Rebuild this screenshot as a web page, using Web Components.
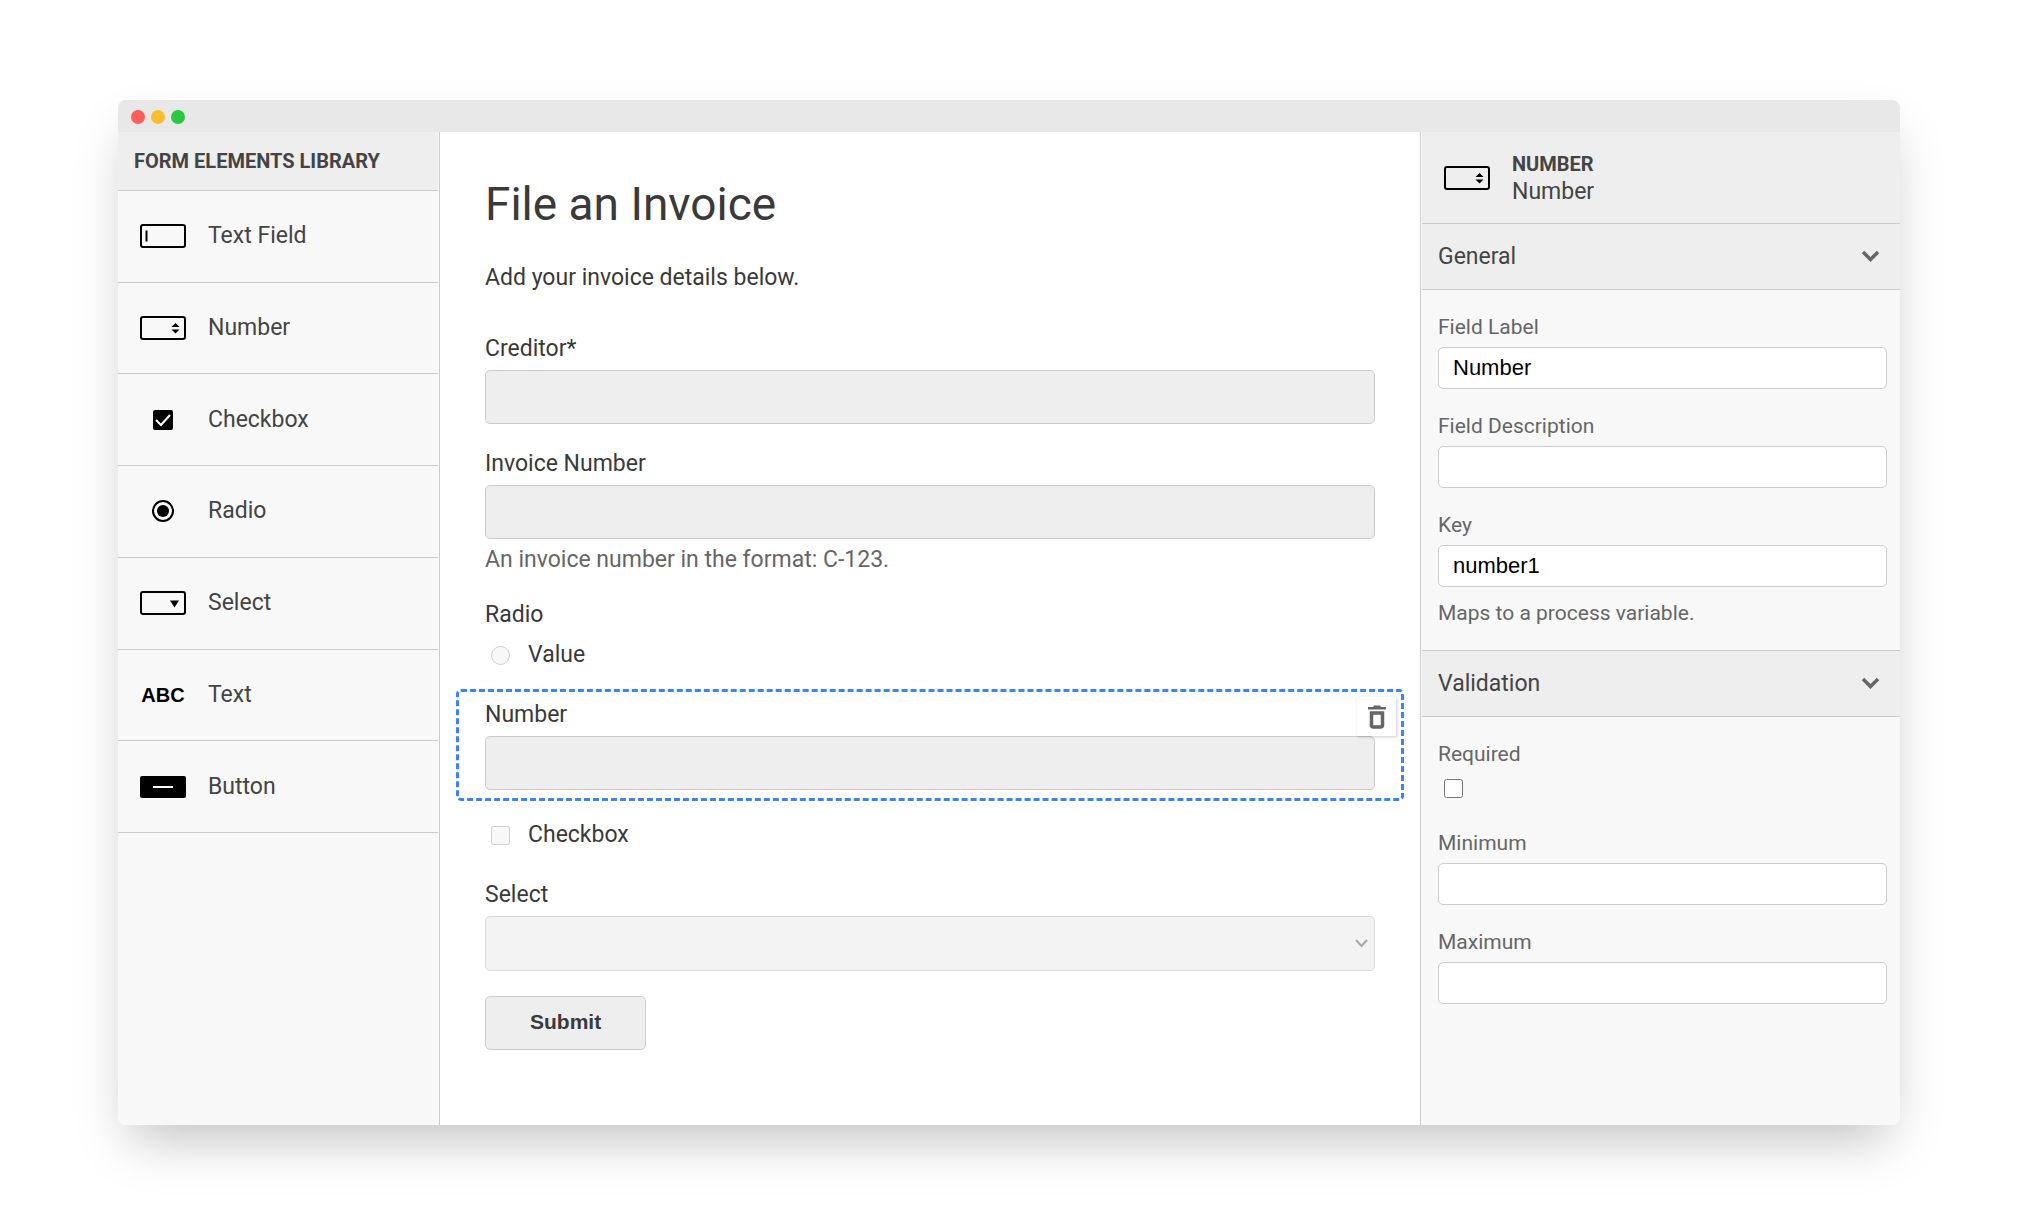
<!DOCTYPE html>
<html lang="en">
<head>
<meta charset="utf-8">
<title>Form Builder</title>
<style>
  body {
    --text: #444;
    --muted: #666;
    --line: #ccc;
    --panel: #f8f8f8;
    --panel-head: #eee;
    --accent: #3b82ff;
    margin: 0;
    min-height: 100vh;
    box-sizing: border-box;
    padding: 100px 118px;
    display: flex;
    background: #fff;
    color: var(--text);
    font: 23px/30px Roboto, "Open Sans", sans-serif;
  }
</style>
</head>
<body>
<builder-window>
  <palette-panel slot="palette" heading="Form Elements Library">
    <palette-item icon="textfield">Text Field</palette-item>
    <palette-item icon="number">Number</palette-item>
    <palette-item icon="checkbox">Checkbox</palette-item>
    <palette-item icon="radio">Radio</palette-item>
    <palette-item icon="select">Select</palette-item>
    <palette-item icon="text">Text</palette-item>
    <palette-item icon="button">Button</palette-item>
  </palette-panel>

  <form-canvas heading="File an Invoice" intro="Add your invoice details below.">
    <form-field type="text" label="Creditor*"></form-field>
    <form-field type="text" label="Invoice Number" description="An invoice number in the format: C-123."></form-field>
    <form-field type="radio" label="Radio" option="Value"></form-field>
    <form-field type="text" label="Number" selected="selected"></form-field>
    <form-field type="checkbox" label="Checkbox"></form-field>
    <form-field type="select" label="Select"></form-field>
    <form-field type="button" label="Submit"></form-field>
  </form-canvas>

  <properties-panel slot="properties" icon="number" kind="Number" name="Number">
    <property-group heading="General">
      <property-entry type="text" label="Field Label" value="Number"></property-entry>
      <property-entry type="text" label="Field Description" value=""></property-entry>
      <property-entry type="text" label="Key" value="number1" description="Maps to a process variable."></property-entry>
    </property-group>
    <property-group heading="Validation">
      <property-entry type="checkbox" label="Required"></property-entry>
      <property-entry type="text" label="Minimum" value=""></property-entry>
      <property-entry type="text" label="Maximum" value=""></property-entry>
    </property-group>
  </properties-panel>
</builder-window>

<script>
const define = (name, render) => customElements.define(name, class extends HTMLElement {
  connectedCallback() {
    if (this.shadowRoot) return;
    this.attachShadow({ mode: "open" }).innerHTML =
      `<style>*{box-sizing:border-box}:host{box-sizing:border-box;display:block}</style>` +
      render(name => this.getAttribute(name) || "");
  }
});

const box = '<rect x="1" y="1" width="44" height="22" rx="2" fill="none" stroke="#000" stroke-width="2"/>';
const ICONS = {
  textfield: box + '<path d="M5.500 6.500h2v11h-2z"/>',
  number: box + '<path d="M35.500 7l4 4h-8zM35.500 17.500l4-4h-8z"/>',
  checkbox: '<rect x="13" y="2" width="20" height="20" rx="2"/><path d="M16 12l5 5 9-10" fill="none" stroke="#fff" stroke-width="2"/>',
  radio: '<circle cx="23" cy="12" r="10" fill="none" stroke="#000" stroke-width="2"/><circle cx="23" cy="12" r="6"/>',
  select: box + '<path d="M30 9.500h9l-4.500 7z"/>',
  button: '<rect y="1" width="46" height="22" rx="2"/><path d="M13 11h20v2H13z" fill="#fff"/>'
};

define("element-icon", attr => `
  <style>
    :host { width: 46px; flex: none; color: #000; text-align: center; }
    svg { display: block; }
    span { font: bold 20px/24px "Liberation Sans", Arial, sans-serif; display: block; }
  </style>
  ${attr("name") === "text" ? "<span>ABC</span>"
    : `<svg width="46" height="24" viewBox="0 0 46 24" aria-hidden="true">${ICONS[attr("name")]}</svg>`}`);

define("builder-window", () => `
  <style>
    :host {
      flex: 1; min-width: 0; display: flex; flex-direction: column; overflow: hidden;
      border-radius: 8px; background: #fff;
      box-shadow: 0 25px 50px -12px rgba(0, 0, 0, .25);
    }
    header { height: 32px; padding: 2px 13px 0; display: flex; align-items: center; gap: 6px; background: #e8e8e8; }
    i { width: 14px; height: 14px; border-radius: 50%; }
    .close { background: #ff5f56; }
    .min { background: #ffbd2e; }
    .max { background: #27c93f; }
    .columns { flex: 1; display: grid; grid-template-columns: 322px minmax(0, 1fr) 480px; }
  </style>
  <header><i class="close"></i><i class="min"></i><i class="max"></i></header>
  <div class="columns"><slot name="palette"></slot><slot></slot><slot name="properties"></slot></div>`);

define("palette-panel", attr => `
  <style>
    :host { background: var(--panel); border-right: 1px solid var(--line); padding-right: 1px; }
    h2 {
      margin: 0; height: 59px; padding: 14px 16px; background: var(--panel-head);
      border-bottom: 1px solid var(--line); font-size: 20px; line-height: 30px;
      font-weight: 700; text-transform: uppercase; white-space: nowrap;
    }
    .items { display: grid; grid-auto-rows: 1fr; height: 642px; }
  </style>
  <h2>${attr("heading")}</h2>
  <div class="items"><slot></slot></div>`);

define("palette-item", attr => `
  <style>
    :host { display: flex; align-items: center; gap: 22px; padding-left: 22px; border-bottom: 1px solid var(--line); }
  </style>
  <element-icon name="${attr("icon")}"></element-icon><span><slot></slot></span>`);

define("form-canvas", attr => `
  <style>
    :host { padding: 44px 16px; color: #3a3a3a; }
    h1 { margin: 0 29px 31px; font-size: 46px; line-height: 56px; font-weight: 400; }
    p { margin: 0 29px 30px; }
    form { display: grid; gap: 3px; }
  </style>
  <h1>${attr("heading")}</h1>
  <p>${attr("intro")}</p>
  <form><slot></slot></form>`);

const fieldBody = {
  text: attr => `
    <label for="f">${attr("label")}</label>
    <input id="f" class="box" type="text" disabled>
    ${attr("description") ? `<div class="description">${attr("description")}</div>` : ""}`,
  radio: attr => `
    <fieldset><legend>${attr("label")}</legend>
    <div class="choice"><input id="f" type="radio" disabled><label for="f">${attr("option")}</label></div></fieldset>`,
  checkbox: attr => `
    <div class="choice"><input id="f" type="checkbox" disabled><label for="f">${attr("label")}</label></div>`,
  select: attr => `
    <label for="f">${attr("label")}</label>
    <div class="select"><select id="f" class="box" disabled><option></option></select>
    <svg width="13" height="9" viewBox="0 0 13 9" aria-hidden="true"><path d="M1 1l5.500 6L12 1" fill="none" stroke="#a8a8a8" stroke-width="2"/></svg></div>`,
  button: attr => `<button class="box submit" type="button">${attr("label")}</button>`
};

define("form-field", attr => `
  <style>
    :host { position: relative; padding: 8px 26px; border: 3px solid transparent; border-radius: 5px; }
    :host([selected]) { border: 3px dashed var(--accent); }
    label, legend { display: block; padding: 0; }
    .box { display: block; width: 100%; height: 54px; margin: 6px 0 0; border: 1px solid #ccc; border-radius: 5px; background: #eee; }
    .description { margin-top: 6px; color: var(--muted); }
    fieldset { margin: 0; padding: 0; border: 0; }
    legend { margin-bottom: 5px; }
    .choice { height: 40px; display: flex; align-items: center; gap: 18px; }
    .choice input { width: 19px; height: 19px; margin: 0 0 0 6px; }
    .select { display: grid; align-items: center; }
    .select > * { grid-area: 1 / 1; }
    select.box { height: 55px; appearance: none; background: #f3f3f3; border-color: #dadada; opacity: 1; }
    .select svg { justify-self: end; margin: 6px 7px 0 0; }
    .submit { width: auto; margin: 0; padding: 0 44px 3px; color: #3a3a3a; font: bold 21px "Liberation Sans", Arial, sans-serif; }
    .delete {
      position: absolute; top: 5px; right: 5px; width: 39px; height: 39px; padding: 0; border: 0;
      display: grid; place-items: center; background: #fff; box-shadow: 1px 1px 3px rgba(0, 0, 0, .2);
    }
  </style>
  ${fieldBody[attr("type")](attr)}
  ${attr("selected") ? `<button class="delete" type="button" aria-label="Remove">
    <svg width="18" height="24" viewBox="0 0 18 24" aria-hidden="true"><path d="M0 2h5l1-1.500h6L13 2h5v2.500H0z" fill="#666"/><path d="M3.500 8h11v12a2 2 0 0 1-2 2h-7a2 2 0 0 1-2-2z" fill="none" stroke="#666" stroke-width="3.500"/></svg>
  </button>` : ""}`);

define("properties-panel", attr => `
  <style>
    :host { background: var(--panel); border-left: 1px solid var(--line); padding-left: 1px; }
    header {
      height: 92px; padding: 0 22px; display: flex; align-items: center; gap: 22px;
      background: var(--panel-head); border-bottom: 1px solid var(--line); line-height: 28px;
    }
    b { display: block; font-size: 20px; text-transform: uppercase; }
  </style>
  <header><element-icon name="${attr("icon")}"></element-icon>
  <div><b>${attr("kind")}</b>${attr("name")}</div></header>
  <slot></slot>`);

define("property-group", attr => `
  <style>
    :host(:not(:first-child)) { border-top: 1px solid var(--line); }
    button {
      width: 100%; height: 66px; margin: 0; padding: 0 20px 0 16px; border: 0;
      border-bottom: 1px solid var(--line); background: var(--panel-head); color: inherit; font: inherit;
      display: flex; align-items: center; justify-content: space-between; text-align: left;
    }
    .entries { display: grid; gap: 24px; padding: 24px 13px 24px 16px; }
  </style>
  <button type="button" aria-expanded="true">${attr("heading")}
    <svg width="19" height="13" viewBox="0 0 19 13" aria-hidden="true"><path d="M2 2l7.500 7.500L17 2" fill="none" stroke="#666" stroke-width="3.500"/></svg>
  </button>
  <div class="entries"><slot></slot></div>`);

define("property-entry", attr => `
  <style>
    :host { color: var(--muted); font-size: 21px; line-height: 26px; }
    label { display: block; margin-bottom: 7px; }
    input[type=text] {
      display: block; width: 100%; height: 42px; padding: 0 14px; border: 1px solid #ccc; border-radius: 5px;
      background: #fff; color: #000; font: 22px "Liberation Sans", Arial, sans-serif;
    }
    input[type=checkbox] { display: block; width: 19px; height: 19px; margin: 12px 6px 8px; }
    .description { margin-top: 13px; }
  </style>
  <label for="p">${attr("label")}</label>
  ${attr("type") === "checkbox" ? `<input id="p" type="checkbox">` : `<input id="p" type="text" value="${attr("value")}">`}
  ${attr("description") ? `<div class="description">${attr("description")}</div>` : ""}`);
</script>
</body>
</html>
